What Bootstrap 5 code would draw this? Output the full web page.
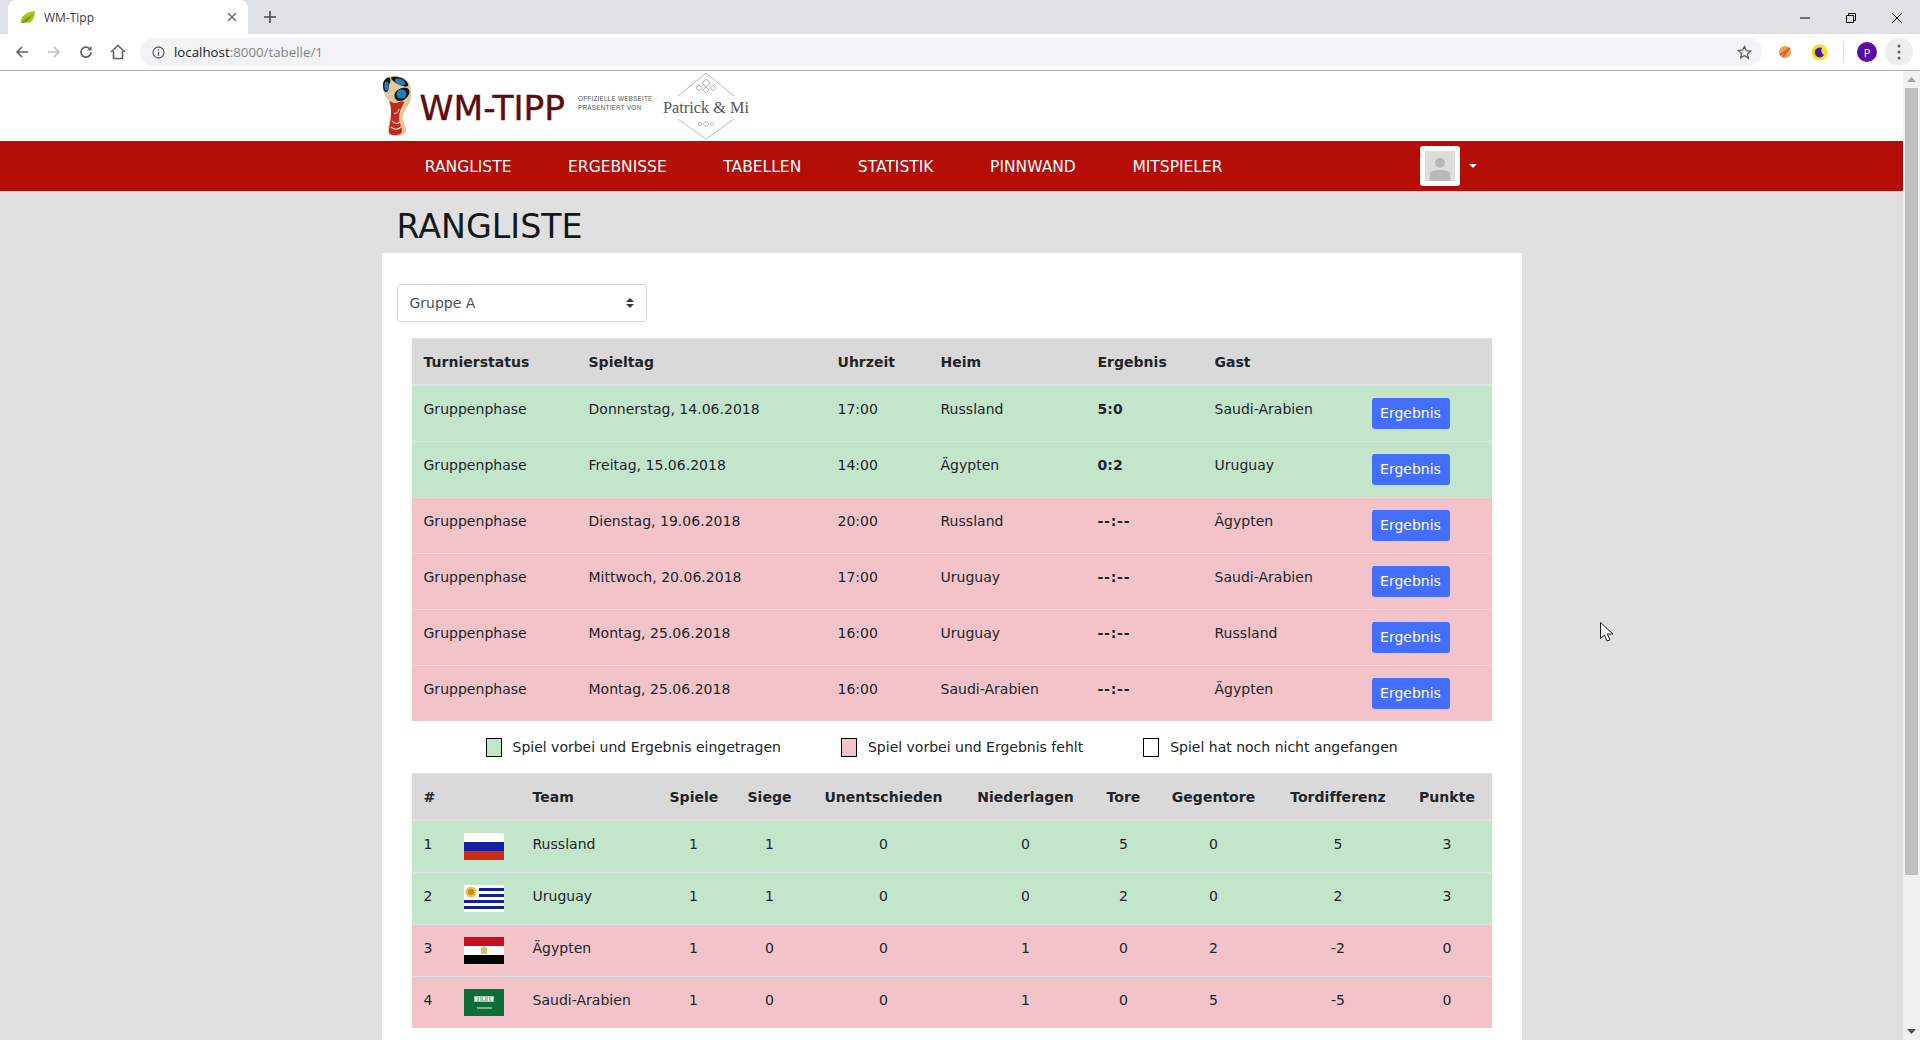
<!DOCTYPE html>
<html lang="de">
  <head>
    <meta charset="UTF-8" />
    <title>WM-Tipp</title>
    <link href="https://cdn.jsdelivr.net/npm/bootstrap@5.3.3/dist/css/bootstrap.min.css" rel="stylesheet" />
    <style>
      body { overflow: hidden; font-family: "DejaVu Sans", Verdana, sans-serif; font-size: 14px; line-height: 21px; color: #212529; }
      /* browser frame */
      .tab-strip { height: 34px; background: #dee1e6; }
      .tab-item { width: 240px; height: 34px; margin-left: 8px; background: #fff; border-radius: 8px 8px 0 0; padding: 0 11px 0 12px; font: 12px "Open Sans", sans-serif; color: #3c4043; }
      .tool-row { height: 37px; background: #fff; border-bottom: 1px solid #b5b5b5; padding: 4px 0; }
      .omni { width: 1622px; height: 28px; margin-left: 140px; background: #f1f3f4; border-radius: 14px; font: 13.3px "Open Sans", sans-serif; color: #80868b; padding: 0 10px 0 12px; }
      .omni b { font-weight: 400; color: #202124; margin-left: 1px; }
      .tool-left { width: 0; }
      .win-btn { width: 46px; }
      /* page */
      .page-pane { background: #e0e0e0; min-width: 0; }
      .scroll-rail { width: 17px; background: #f1f1f1; padding: 0 2px; }
      .scroll-thumb { height: 787px; background: #c1c1c1; margin-top: 0; }
      .scroll-up { height: 17px; }
      .logo-band { height: 70px; background: #fff; }
      .wide-box { width: 1140px; margin: 0 auto; }
      .logo-word { font: 34.4px/1 "DejaVu Sans", sans-serif; color: #5e0b0e; margin-left: 8px; margin-top: 4px; -webkit-text-stroke: .4px #5e0b0e; }
      .logo-small { font: 6.4px/9px "Liberation Sans", sans-serif; color: #555; margin-left: 13px; margin-top: -6px; text-transform: uppercase; letter-spacing: .2px; width: 84px; }
      .red-bar { height: 50px; background: #b30d06; }
      .red-bar .navbar-nav .nav-link { color: #fff; font-size: 15.5px; padding: 1px 28.3px 0; line-height: 50px; }
      .nav-first { margin-left: 15px; }
      .user-toggle { margin-right: 45px; color: #fff; }
      .user-toggle::after { margin-left: 9px; vertical-align: 4px; }
      .user-pic { display: block; width: 40px; height: 40px; background: #fff; border-radius: 3px; padding: 5px; }
      .page-title { height: 62px; padding: 9px 0 0 15px; font-size: 33.3px; line-height: 54px; margin: 0; font-weight: 400; color: #14171a; }
      .white-sheet { background: #fff; padding: 31px 30px 40px 30px; height: 800px; }
      .group-select { width: 250px; height: 38px; margin: 0 0 16px -15px; padding: 1px 12px 0; font-size: 14px; color: #495057; border-color: #ced4da; border-radius: 4px;
        background-image: url("data:image/svg+xml,%3csvg xmlns='http://www.w3.org/2000/svg' viewBox='0 0 4 5'%3e%3cpath fill='%23343a40' d='M2 0L0 2h4zm0 5L0 3h4z'/%3e%3c/svg%3e");
        background-size: 8px 10px; background-position: right 12px center; }
      .table.score-table { table-layout: fixed; width: 1080px; margin: 0; border-color: #dee2e6; }
      .table.score-table > * > * > * { padding: 13px 12px 12px; border-top: 1px solid #dee2e6; border-bottom: 0; color: #212529; vertical-align: top; letter-spacing: .02px; }
      .table.score-table > thead > tr > th { --bs-table-bg: #d9d9d9; padding-bottom: 11px; border-bottom: 2px solid #dee2e6; font-weight: 700; white-space: nowrap; }
      .table-success { --bs-table-bg: #c3e6cb; }
      .table-danger { --bs-table-bg: #f3c3ca; }
      .result-btn { display: block; width: 78px; height: 31px; margin-top: -1px; padding: 0; font-size: 14px; line-height: 31px; background: #436eff; border: 0; border-radius: 3px; color: #fff; }
      .open-score { letter-spacing: .8px !important; }
      .legend-row { height: 52px; padding-left: 74px; gap: 60px; }
      .legend-box { width: 16px; height: 19px; border: 1px solid #000; margin-right: 11px; flex: none; }
      .box-green { background: #c3e6cb; }
      .box-red { background: #f3c3ca; }
      .flag-pic { display: block; width: 40px; height: 27px; margin-top: -1px; }
      .mouse-arrow { position: absolute; left: 1600px; top: 622px; }
      .scroll-down { position: absolute; left: 1907px; top: 1029px; }
    </style>
  </head>

  <body>
    <div class="d-flex flex-column vh-100">
      <!--browser tab row-->
      <div class="tab-strip d-flex align-items-center">
        <div class="tab-item d-flex align-items-center">
          <svg width="16" height="16" viewBox="0 0 16 16" class="me-2"><path d="M1 14C0 8 5 3 15 2c0 8-3 12-9 12-2 0-4 0-5 0z" fill="#a5c81e"/><path d="M1 14c3-4 7-6 12-9-3 5-6 9-12 9z" fill="#7a9c12"/></svg>
          <span class="flex-grow-1">WM-Tipp</span>
          <svg width="10" height="10" viewBox="0 0 10 10"><path d="M1 1l8 8M9 1l-8 8" stroke="#5f6368" stroke-width="1.4"/></svg>
        </div>
        <svg width="12" height="12" viewBox="0 0 12 12" class="ms-3"><path d="M6 0v12M0 6h12" stroke="#45484d" stroke-width="1.6"/></svg>
        <div class="ms-auto d-flex align-items-center">
          <div class="win-btn text-center"><svg width="10" height="10" viewBox="0 0 10 10"><path d="M0 5h10" stroke="#000"/></svg></div>
          <div class="win-btn text-center"><svg width="10" height="10" viewBox="0 0 10 10"><path d="M.5 2.500h7v7h-7zM2.500 2.500v-2h7v7h-2" fill="none" stroke="#000"/></svg></div>
          <div class="win-btn text-center"><svg width="12" height="12" viewBox="0 0 12 12"><path d="M1 1l10 10M11 1L1 11" stroke="#000"/></svg></div>
        </div>
      </div>

      <!--browser address row-->
      <div class="tool-row d-flex align-items-center position-relative">
        <div class="tool-left d-flex align-items-center">
          <svg width="14" height="14" viewBox="0 0 14 14" style="margin-left:15px;flex:none"><path d="M13 7H2M7 2L2 7l5 5" fill="none" stroke="#5f6368" stroke-width="1.7"/></svg>
          <svg width="14" height="14" viewBox="0 0 14 14" style="margin-left:18px;flex:none"><path d="M1 7h11M7 2l5 5-5 5" fill="none" stroke="#bdc1c6" stroke-width="1.7"/></svg>
          <svg width="14" height="14" viewBox="0 0 14 14" style="margin-left:18px;flex:none"><path d="M12 7a5 5 0 1 1-1.500-3.500" fill="none" stroke="#5f6368" stroke-width="1.7"/><path d="M12.500 1v4.500H8z" fill="#5f6368"/></svg>
          <svg width="16" height="16" viewBox="0 0 16 16" style="margin-left:17px;flex:none"><path d="M1 8l7-6.500L15 8M3.500 7v7.500h9V7" fill="none" stroke="#5f6368" stroke-width="1.600"/></svg>
        </div>
        <div class="omni d-flex align-items-center">
          <svg width="13" height="13" viewBox="0 0 13 13" class="me-2"><circle cx="6.500" cy="6.500" r="5.500" fill="none" stroke="#5f6368" stroke-width="1.300"/><path d="M6.500 5.700v4M6.500 3.200v1.300" stroke="#5f6368" stroke-width="1.400"/></svg>
          <span class="flex-grow-1"><b>localhost</b>:8000/tabelle/1</span>
          <svg width="15" height="15" viewBox="0 0 24 24"><path d="M12 2.500l2.900 6.400 7 .8-5.200 4.700 1.400 6.900L12 17l-6.100 3.300 1.400-6.900-5.200-4.700 7-.8z" fill="none" stroke="#5f6368" stroke-width="2.200"/></svg>
        </div>
        <svg width="16" height="16" viewBox="0 0 16 16" style="margin-left:15px"><circle cx="8" cy="8" r="6" fill="#e8a15a"/><path d="M3 11L13 4M6 13l6-9" stroke="#d9621e" stroke-width="2"/></svg>
        <svg width="17" height="17" viewBox="0 0 17 17" style="margin-left:18px"><circle cx="8.500" cy="8.500" r="8" fill="#f5dc2a"/><path d="M11 4a5 5 0 1 0 2 7 5 5 0 0 1-2-7z" fill="#4a1a9c"/></svg>
        <div class="border-start" style="height:18px;margin-left:15px"></div>
        <div class="d-flex align-items-center justify-content-center text-white rounded-circle" style="width:20px;height:20px;margin-left:13px;background:#5a0ea3;font:11px 'Open Sans',sans-serif">P</div>
        <div class="d-flex flex-column align-items-center justify-content-center gap-1 rounded-circle" style="width:28px;height:28px;margin-left:8px;background:#eee">
          <svg width="4" height="16" viewBox="0 0 4 16"><circle cx="2" cy="2" r="1.500" fill="#5f6368"/><circle cx="2" cy="8" r="1.500" fill="#5f6368"/><circle cx="2" cy="14" r="1.500" fill="#5f6368"/></svg>
        </div>
      </div>

      <div class="d-flex flex-grow-1 overflow-hidden">
        <div class="page-pane flex-grow-1 overflow-hidden">
          <!--logo-->
          <div class="logo-band">
            <div class="wide-box d-flex align-items-center h-100">
              <svg width="30" height="62" viewBox="0 0 30 62" class="flex-shrink-0">
                <path d="M10 1C4 1 1 5 1 11c0 6 2 11 6 15 3 4 3 8 2 13-1 6-3 11-3 16 0 4 4 6 9 6s9-2 9-6c0-4-3-8-3-12 0-6 4-10 6-14 3-5 3-13 1-19C26 4 18 0 10 1z" fill="#e4c79a"/>
                <path d="M7 26c4 2 7 3 10 1 3-1 5-1 5 1-3 5-5 9-5 15 0 5 3 9 3 13 0 2-2 4-7 4s-6-1-6-4c0-6 2-11 2-16s0-10-2-14z" fill="#c12a22"/>
                <path d="M10 46c2 3 6 3 8 1M9 52c3 3 7 3 10 0" fill="none" stroke="#f3d9c0" stroke-width="1.200"/>
                <path d="M12 38c3 1 4-1 5-4" fill="none" stroke="#f3d9c0" stroke-width="1"/>
                <path d="M1 10c0-5 5-9 7-7 1 3 0 5-1 7 0 4-1 7-3 7-2 0-3-3-3-7z" fill="#101820"/>
                <ellipse cx="4.500" cy="11" rx="2.200" ry="4.500" fill="#2a7cb5"/>
                <path d="M10 2c5-1 14 1 16 7 1 3-2 3-5 2-4-1-8-3-11-6-1-1-1-3 0-3z" fill="#101820"/>
                <ellipse cx="18" cy="7" rx="5.500" ry="3" fill="#2a7cb5" transform="rotate(25 18 7)"/>
                <path d="M13 18c2-4 8-6 12-5 3 1 3 5 1 8-2 3-5 5-9 5-3 0-6-4-4-8z" fill="#101820"/>
                <ellipse cx="19.500" cy="19" rx="5" ry="4.500" fill="#2a7cb5"/>
              </svg>
              <span class="logo-word">WM-TIPP</span>
              <span class="logo-small">Offizielle Webseite<br />Präsentiert von</span>
              <svg width="88" height="68" viewBox="0 0 88 68" class="flex-shrink-0">
                <path d="M16 24L44 1l28 23M16 47l28 20 28-20" fill="none" stroke="#aaa" stroke-width=".8"/>
                <path d="M44 7l4 4-4 4-4-4zM37 13l3 3-3 3-3-3zM51 13l3 3-3 3-3-3zM44 15l3 3-3 3-3-3z" fill="none" stroke="#aaa" stroke-width=".8"/>
                <path d="M38 50l2 2-2 2-2-2zM44 49l3 3-3 3-3-3zM50 50l2 2-2 2-2-2z" fill="none" stroke="#aaa" stroke-width=".7"/>
                <text x="44" y="41" text-anchor="middle" font-family="'Liberation Serif',serif" font-size="16.3" fill="#555">Patrick &amp; Mi</text>
              </svg>
            </div>
          </div>

          <!--main navigation-->
          <nav class="navbar navbar-expand p-0 red-bar">
            <div class="wide-box d-flex align-items-center">
              <ul class="navbar-nav nav-first">
                <li class="nav-item"><a class="nav-link" href="#">RANGLISTE</a></li>
                <li class="nav-item"><a class="nav-link" href="#">ERGEBNISSE</a></li>
                <li class="nav-item"><a class="nav-link" href="#">TABELLEN</a></li>
                <li class="nav-item"><a class="nav-link" href="#">STATISTIK</a></li>
                <li class="nav-item"><a class="nav-link" href="#">PINNWAND</a></li>
                <li class="nav-item"><a class="nav-link" href="#">MITSPIELER</a></li>
              </ul>
              <a class="user-toggle dropdown-toggle ms-auto d-flex align-items-center text-decoration-none" href="#">
                <span class="user-pic">
                  <svg width="30" height="30" viewBox="0 0 30 30" class="d-block"><rect width="30" height="30" fill="#dcdcdc"/><circle cx="15" cy="12" r="5" fill="#b8b8b8"/><path d="M5 30v-7c0-3 5-4 10-4s10 1 10 4v7z" fill="#b8b8b8"/></svg>
                </span>
              </a>
            </div>
          </nav>

          <div class="wide-box">
            <h1 class="page-title">RANGLISTE</h1>
            <div class="white-sheet">
              <select class="form-select group-select"><option>Gruppe A</option></select>

              <table class="table score-table">
                <colgroup>
                  <col style="width:165px" /><col style="width:249px" /><col style="width:103px" /><col style="width:157px" /><col style="width:117px" /><col style="width:157px" /><col style="width:132px" />
                </colgroup>
                <thead>
                  <tr><th>Turnierstatus</th><th>Spieltag</th><th>Uhrzeit</th><th>Heim</th><th>Ergebnis</th><th>Gast</th><th></th></tr>
                </thead>
                <tbody id="gameRows"></tbody>
              </table>

              <div class="legend-row d-flex align-items-center">
                <div class="d-flex align-items-center"><span class="legend-box box-green"></span>Spiel vorbei und Ergebnis eingetragen</div>
                <div class="d-flex align-items-center"><span class="legend-box box-red"></span>Spiel vorbei und Ergebnis fehlt</div>
                <div class="d-flex align-items-center"><span class="legend-box"></span>Spiel hat noch nicht angefangen</div>
              </div>

              <table class="table score-table text-center">
                <colgroup>
                  <col style="width:40px" /><col style="width:69px" /><col style="width:137px" /><col style="width:72px" /><col style="width:80px" /><col style="width:148px" /><col style="width:136px" /><col style="width:60px" /><col style="width:120px" /><col style="width:129px" /><col style="width:89px" />
                </colgroup>
                <thead>
                  <tr><th class="text-start">#</th><th></th><th class="text-start">Team</th><th>Spiele</th><th>Siege</th><th>Unentschieden</th><th>Niederlagen</th><th>Tore</th><th>Gegentore</th><th>Tordifferenz</th><th>Punkte</th></tr>
                </thead>
                <tbody>
                  <tr class="table-success">
                    <td class="text-start">1</td>
                    <td><svg class="flag-pic" viewBox="0 0 40 27"><rect width="40" height="9" fill="#fff"/><rect y="9" width="40" height="9" fill="#1420a0"/><rect y="18" width="40" height="9" fill="#cc2a14"/></svg></td>
                    <td class="text-start">Russland</td><td>1</td><td>1</td><td>0</td><td>0</td><td>5</td><td>0</td><td>5</td><td>3</td>
                  </tr>
                  <tr class="table-success">
                    <td class="text-start">2</td>
                    <td><svg class="flag-pic" viewBox="0 0 40 27"><rect width="40" height="27" fill="#fff"/><path d="M15 3h25v3H15zM15 9h25v3H15zM0 15h40v3H0zM0 21h40v3H0z" fill="#141f9a"/><circle cx="7" cy="7" r="5.500" fill="#e8c65a"/><circle cx="7" cy="7" r="3.200" fill="#c8920c"/></svg></td>
                    <td class="text-start">Uruguay</td><td>1</td><td>1</td><td>0</td><td>0</td><td>2</td><td>0</td><td>2</td><td>3</td>
                  </tr>
                  <tr class="table-danger">
                    <td class="text-start">3</td>
                    <td><svg class="flag-pic" viewBox="0 0 40 27"><rect width="40" height="9" fill="#c30f20"/><rect y="9" width="40" height="9" fill="#fff"/><rect y="18" width="40" height="9" fill="#000"/><path d="M17 11l3-2 3 2v6h-6z" fill="#d8bf6e"/></svg></td>
                    <td class="text-start">Ägypten</td><td>1</td><td>0</td><td>0</td><td>1</td><td>0</td><td>2</td><td>-2</td><td>0</td>
                  </tr>
                  <tr class="table-danger">
                    <td class="text-start">4</td>
                    <td><svg class="flag-pic" viewBox="0 0 40 27"><rect width="40" height="27" fill="#0a6e36"/><path d="M10 7h20v6H10z" fill="#9fc6ab"/><path d="M11 8h2v4h-2zM15 7h1v5h-1zM19 8h2v3h-2zM24 7h1v5h-1zM27 8h2v4h-2z" fill="#f4f8f5"/><path d="M13 19h15" stroke="#eef5f0"/></svg></td>
                    <td class="text-start">Saudi-Arabien</td><td>1</td><td>0</td><td>0</td><td>1</td><td>0</td><td>5</td><td>-5</td><td>0</td>
                  </tr>
                </tbody>
              </table>
            </div>
          </div>
        </div>

        <!--scrollbar-->
        <div class="scroll-rail">
          <div class="scroll-up d-flex align-items-center justify-content-center">
            <svg width="9" height="5" viewBox="0 0 9 5"><path d="M4.500 0L9 5H0z" fill="#a3a3a3"/></svg>
          </div>
          <div class="scroll-thumb"></div>
        </div>
      </div>
    </div>
    <svg class="scroll-down" width="9" height="5" viewBox="0 0 9 5"><path d="M0 0h9L4.500 5z" fill="#505050"/></svg>

    <svg class="mouse-arrow" width="14" height="20" viewBox="0 0 14 20"><path d="M.5.500v16l4-3.500 2.500 6 3-1.200-2.700-5.800H13z" fill="#fff" stroke="#1a1a2a"/></svg>

    <script src="https://cdn.jsdelivr.net/npm/bootstrap@5.3.3/dist/js/bootstrap.bundle.min.js"></script>
    <script>
      const games = [
        ["Donnerstag, 14.06.2018", "17:00", "Russland", "5:0", "Saudi-Arabien", "table-success"],
        ["Freitag, 15.06.2018", "14:00", "Ägypten", "0:2", "Uruguay", "table-success"],
        ["Dienstag, 19.06.2018", "20:00", "Russland", "--:--", "Ägypten", "table-danger"],
        ["Mittwoch, 20.06.2018", "17:00", "Uruguay", "--:--", "Saudi-Arabien", "table-danger"],
        ["Montag, 25.06.2018", "16:00", "Uruguay", "--:--", "Russland", "table-danger"],
        ["Montag, 25.06.2018", "16:00", "Saudi-Arabien", "--:--", "Ägypten", "table-danger"],
      ];
      document.getElementById("gameRows").innerHTML = games
        .map(
          (g) => `<tr class="${g[5]}"><td>Gruppenphase</td><td>${g[0]}</td><td>${g[1]}</td><td>${g[2]}</td><td class="fw-bold ${g[3] === "--:--" ? "open-score" : ""}">${g[3]}</td><td>${g[4]}</td><td><button class="btn result-btn" type="button">Ergebnis</button></td></tr>`
        )
        .join("");
    </script>
  </body>
</html>
